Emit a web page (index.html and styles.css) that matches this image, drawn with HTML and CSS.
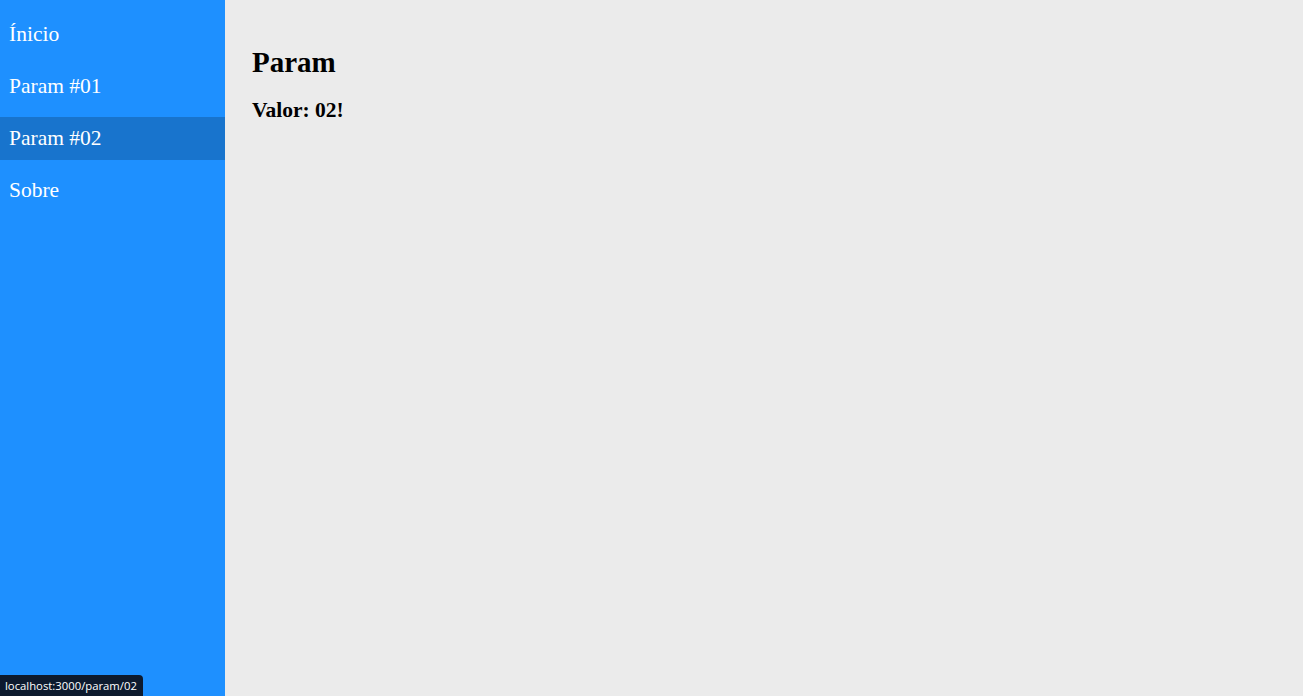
FILE: index.html
```html
<!DOCTYPE html>
<html lang="pt-BR">
<head>
<meta charset="utf-8">
<title>Param</title>
<link rel="stylesheet" href="styles.css">
</head>
<body>
<div class="app">
  <nav class="sidebar">
    <a class="nav-item" href="#">Ínicio</a>
    <a class="nav-item" href="#">Param #01</a>
    <a class="nav-item active" href="#">Param #02</a>
    <a class="nav-item" href="#">Sobre</a>
  </nav>
  <main class="content">
    <h1 class="title">Param</h1>
    <h2 class="value">Valor: 02!</h2>
  </main>
</div>
<div class="status">localhost:3000/param/02</div>
</body>
</html>
```
FILE: styles.css
```css
html, body {
  margin: 0;
  padding: 0;
  height: 100%;
}
body {
  font-family: "Liberation Serif", "Times New Roman", serif;
  background: #ebebeb;
}
.app {
  display: flex;
  height: 100vh;
}
.sidebar {
  width: 225px;
  flex: 0 0 225px;
  background: #1e90ff;
  display: flex;
  flex-direction: column;
  gap: 9px;
  padding-top: 13px;
  box-sizing: border-box;
}
.nav-item {
  display: flex;
  align-items: center;
  height: 43px;
  padding-left: 9px;
  color: #ffffff;
  text-decoration: none;
  font-size: 21.5px;
}
.nav-item.active {
  background: #1874cd;
}
.content {
  flex: 1;
  padding: 27px 27px;
}
.title {
  margin: 19px 0 0;
  font-size: 29px;
  line-height: 32px;
  color: #000;
}
.value {
  margin: 20px 0 0;
  font-size: 21.5px;
  line-height: 24px;
  color: #000;
}
.status {
  position: fixed;
  left: 0;
  bottom: 0;
  height: 21px;
  padding: 0 6px 0 5px;
  background: #0d1a2e;
  color: #ffffff;
  font-family: "Open Sans", "DejaVu Sans", sans-serif;
  font-size: 11.3px;
  line-height: 21px;
  border-top-right-radius: 4px;
}
```
